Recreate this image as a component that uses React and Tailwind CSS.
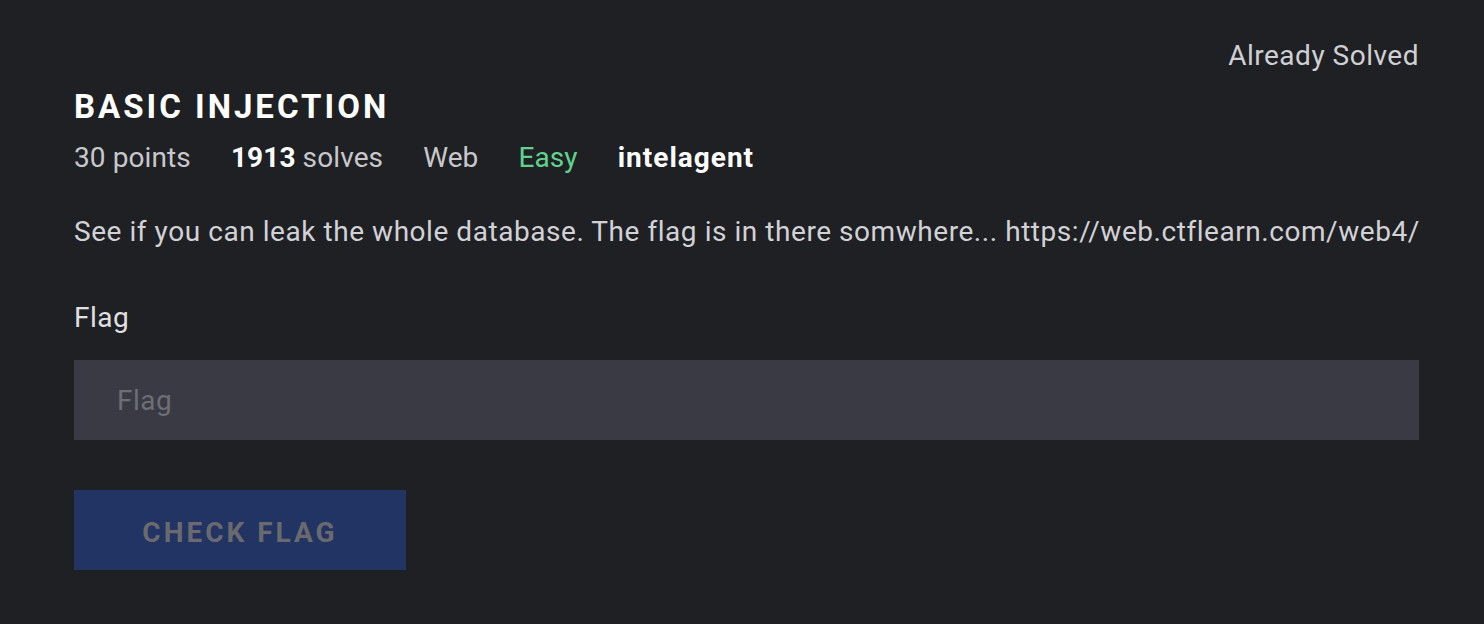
import React from "react";

export default function App() {
  return (
    <div className="min-h-[624px] w-full bg-[#1f2024] pl-[74px] pr-[65px] pt-[38px] font-['Roboto',sans-serif] text-[#d8d8da]">
      <div className="flex justify-end">
        <span className="text-[28px] leading-[36px] tracking-[0.5px] text-[#d0d0d4]">Already Solved</span>
      </div>

      <h1 className="mt-[13px] text-[33px] font-bold leading-[40px] tracking-[3px] text-white">BASIC INJECTION</h1>

      <div className="mt-[13px] flex items-center gap-[40px] text-[28px] leading-[36px] tracking-[0.1px]">
        <span className="text-[#c8c8cc]">30 points</span>
        <span className="text-[#c8c8cc]">
          <span className="font-bold text-white">1913</span> solves
        </span>
        <span className="text-[#c8c8cc]">Web</span>
        <span className="text-[#5fd38e]">Easy</span>
        <span className="font-bold tracking-[1px] text-white">intelagent</span>
      </div>

      <p className="mt-[38px] whitespace-nowrap text-[28px] leading-[36px] tracking-[0.55px] text-[#d2d2d6]">
        See if you can leak the whole database. The flag is in there somwhere... https://web.ctflearn.com/web4/
      </p>

      <label className="mt-[50px] block text-[28px] leading-[36px] tracking-[0.5px] text-[#e0e0e2]">Flag</label>

      <input
        type="text"
        placeholder="Flag"
        className="mt-[24px] block h-[80px] w-full bg-[#3a3a44] px-[43px] text-[28px] tracking-[0.5px] text-white outline-none placeholder:text-[#6e6e76]"
      />

      <button className="mt-[50px] h-[80px] w-[332px] bg-[#223463] pt-[5px] text-[28px] font-bold tracking-[3px] text-[#6a6a6e]">
        CHECK FLAG
      </button>
    </div>
  );
}
